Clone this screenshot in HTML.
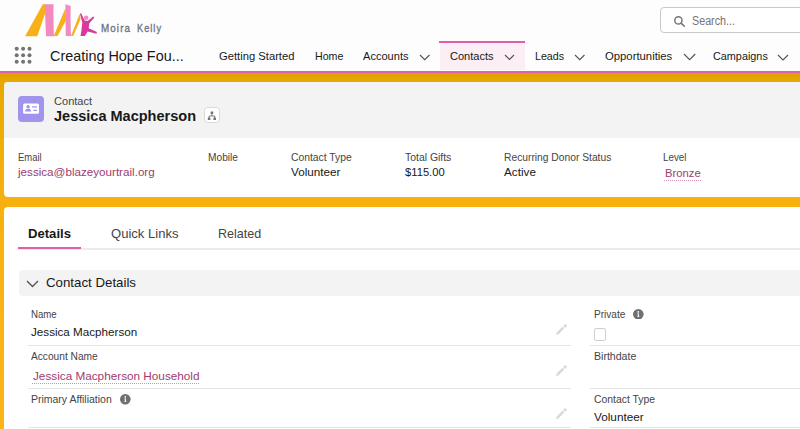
<!DOCTYPE html><html><head><meta charset="utf-8"><style>
html,body{margin:0;padding:0;}
body{width:800px;height:429px;overflow:hidden;position:relative;background:#fff;font-family:"Liberation Sans",sans-serif;}
.t{position:absolute;white-space:nowrap;line-height:1;transform-origin:0 0;}
.r{position:absolute;}
</style></head><body>
<div class="r" style="left:0px;top:0px;width:800px;height:71px;background:#fdfdfd"></div>
<div class="r" style="left:0px;top:70.5px;width:800px;height:2.5px;background:#e060a8"></div>
<div class="r" style="left:0px;top:73px;width:800px;height:356px;background:linear-gradient(#dea000 0px,#e9a801 9px,#f7b10f 127px,#fbb515 356px)"></div>
<div class="r" style="left:439px;top:41px;width:86px;height:2px;background:#e060a8"></div>
<div class="r" style="left:439.5px;top:43px;width:85.5px;height:26.5px;background:#fbeef4"></div>
<svg class="r" style="left:0;top:0" width="170" height="40" viewBox="0 0 170 40">
<path d="M25.1 36.2 L42.8 4.2 L45.2 4.2 L45.6 12 L37.3 36.2 Z" fill="#f7b116"/>
<path d="M44.7 4.2 L53.6 4.2 C53.2 14 53.6 26 54 36.2 L46.1 36.2 C45.4 26 45.2 14 44.7 4.2 Z" fill="#f28ac0"/>
<path d="M53.7 35.9 L65.5 8 L66.2 20 L57.5 35.9 Z" fill="#f7b116"/>
<path d="M65.4 4.2 L70.7 6 C70.4 15 70.6 26 71 35.9 L65.8 35.9 C65.6 26 65.6 15 65.4 4.2 Z" fill="#f28ac0"/>
<path d="M71 35.9 L79.6 14 L80.6 19 L73.2 35.9 Z" fill="#f7b116"/>
<path d="M79.9 13.7 L81.1 13.3 L84.7 20.4 L87.7 20.9 L93.1 16.5 L94.3 17.5 L89.3 23.2 L88.7 28.3 L96.9 32.0 L96.5 33.8 L87.6 31.5 L84.9 36.1 L80.5 36.1 L81.5 30.0 L82.3 22.6 Z" fill="#d63a9c"/>
<circle cx="86.2" cy="17.7" r="2.25" fill="#f08cc0"/>
</svg>
<div class="t" style="left:101.00px;top:23px;font-size:11.8px;color:#6d737b;transform:scaleX(0.8350);-webkit-text-stroke:0.35px #6d737b;letter-spacing:1.3px;">Moira</div>
<div class="t" style="left:137.00px;top:23px;font-size:11.8px;color:#6d737b;transform:scaleX(0.7798);-webkit-text-stroke:0.35px #6d737b;letter-spacing:1.3px;">Kelly</div>
<div class="r" style="left:659.8px;top:7px;width:160px;height:25.8px;background:#fff;border:1px solid #c9c9c9;border-radius:4px;box-sizing:border-box"></div>
<svg class="r" style="left:672;top:14" width="14" height="14" viewBox="0 0 14 14"><circle cx="6.4" cy="6.4" r="3.6" fill="none" stroke="#767676" stroke-width="1.5"/><path d="M9.1 9.1 L12.3 12.2" stroke="#767676" stroke-width="1.6" stroke-linecap="round"/></svg>
<div class="t" style="left:692.00px;top:15px;font-size:12px;color:#747474;transform:scaleX(0.8953);">Search...</div>
<svg class="r" style="left:0;top:0" width="40" height="70" viewBox="0 0 40 70"><circle cx="16.7" cy="48.7" r="2.0" fill="#747474"/><circle cx="16.7" cy="55.2" r="2.0" fill="#747474"/><circle cx="16.7" cy="61.7" r="2.0" fill="#747474"/><circle cx="23.1" cy="48.7" r="2.0" fill="#747474"/><circle cx="23.1" cy="55.2" r="2.0" fill="#747474"/><circle cx="23.1" cy="61.7" r="2.0" fill="#747474"/><circle cx="29.5" cy="48.7" r="2.0" fill="#747474"/><circle cx="29.5" cy="55.2" r="2.0" fill="#747474"/><circle cx="29.5" cy="61.7" r="2.0" fill="#747474"/></svg>
<div class="t" style="left:50.00px;top:49px;font-size:14.6px;color:#181818;transform:scaleX(0.9869);">Creating Hope Fou...</div>
<div class="t" style="left:219.00px;top:51px;font-size:11.8px;color:#181818;transform:scaleX(0.9511);">Getting Started</div>
<div class="t" style="left:314.60px;top:51px;font-size:11.8px;color:#181818;transform:scaleX(0.9023);">Home</div>
<div class="t" style="left:363.00px;top:51px;font-size:11.8px;color:#181818;transform:scaleX(0.9376);">Accounts</div>
<div class="t" style="left:449.90px;top:51px;font-size:11.8px;color:#181818;transform:scaleX(0.9360);">Contacts</div>
<div class="t" style="left:534.70px;top:51px;font-size:11.8px;color:#181818;transform:scaleX(0.9034);">Leads</div>
<div class="t" style="left:605.00px;top:51px;font-size:11.8px;color:#181818;transform:scaleX(0.9582);">Opportunities</div>
<div class="t" style="left:713.00px;top:51px;font-size:11.8px;color:#181818;transform:scaleX(0.9183);">Campaigns</div>
<svg class="r" style="left:418px;top:52.625px" width="13.5" height="8.75"><path d="M2 2 L6.75 6.75 L11.5 2" fill="none" stroke="#555" stroke-width="1.15"/></svg>
<svg class="r" style="left:503px;top:52.75px" width="13" height="8.5"><path d="M2 2 L6.5 6.5 L11 2" fill="none" stroke="#555" stroke-width="1.15"/></svg>
<svg class="r" style="left:573.3px;top:52.63749999999999px" width="13.450000000000045" height="8.725000000000023"><path d="M2 2 L6.725000000000023 6.725000000000023 L11.450000000000045 2" fill="none" stroke="#555" stroke-width="1.15"/></svg>
<svg class="r" style="left:681.8px;top:52.19999999999999px" width="15.200000000000045" height="9.600000000000023"><path d="M2 2 L7.600000000000023 7.600000000000023 L13.200000000000045 2" fill="none" stroke="#555" stroke-width="1.15"/></svg>
<svg class="r" style="left:776px;top:52.5px" width="14" height="9.0"><path d="M2 2 L7.0 7.0 L12 2" fill="none" stroke="#555" stroke-width="1.15"/></svg>
<div class="r" style="left:4px;top:82px;width:900px;height:114.6px;background:#fff;border-radius:4px;overflow:hidden"></div>
<div class="r" style="left:4px;top:82px;width:900px;height:56px;background:#f3f3f3;border-radius:4px 4px 0 0"></div>
<svg class="r" style="left:18px;top:96px" width="26" height="26" viewBox="0 0 26 26">
<rect x="0" y="0" width="26" height="26" rx="4" fill="#a094ec"/>
<rect x="5.1" y="7.5" width="15.9" height="10.3" rx="1.5" fill="#fff"/>
<circle cx="10.1" cy="10.7" r="1.7" fill="#a094ec"/>
<path d="M7.1 15.4 C7.1 13.2 8.6 12.8 10.1 12.8 C11.6 12.8 13.1 13.2 13.1 15.4 Z" fill="#a094ec"/>
<rect x="14" y="10.3" width="5" height="1.2" fill="#a094ec"/>
<rect x="15.4" y="13.8" width="3.6" height="1.2" fill="#a094ec"/>
</svg>
<div class="t" style="left:54.40px;top:96px;font-size:10.5px;color:#444;transform:scaleX(1.0525);">Contact</div>
<div class="t" style="left:54.00px;top:109px;font-size:14.5px;color:#181818;font-weight:bold;transform:scaleX(1.0011);">Jessica Macpherson</div>
<svg class="r" style="left:203.5px;top:106.5px" width="16" height="16" viewBox="0 0 16 16">
<rect x="0.5" y="0.5" width="15" height="15" rx="3" fill="#fff" stroke="#d9d9d9"/>
<rect x="6.6" y="4.6" width="2.6" height="2.5" rx="0.4" fill="#747474"/>
<path d="M7.9 7 V9 M5.1 11 V9 H10.7 V11" fill="none" stroke="#747474" stroke-width="0.9"/>
<rect x="3.8" y="10.6" width="2.6" height="2.5" rx="0.4" fill="#747474"/>
<rect x="9.4" y="10.6" width="2.6" height="2.5" rx="0.4" fill="#747474"/>
</svg>
<div class="t" style="left:18.40px;top:152px;font-size:10.5px;color:#444;transform:scaleX(0.8990);">Email</div>
<div class="t" style="left:208.00px;top:152px;font-size:10.5px;color:#444;transform:scaleX(0.9702);">Mobile</div>
<div class="t" style="left:291.00px;top:152px;font-size:10.5px;color:#444;transform:scaleX(0.9856);">Contact Type</div>
<div class="t" style="left:404.70px;top:152px;font-size:10.5px;color:#444;transform:scaleX(0.9920);">Total Gifts</div>
<div class="t" style="left:503.60px;top:152px;font-size:10.5px;color:#444;transform:scaleX(0.9779);">Recurring Donor Status</div>
<div class="t" style="left:663.20px;top:152px;font-size:10.5px;color:#444;transform:scaleX(0.9325);">Level</div>
<div class="t" style="left:18.29px;top:167px;font-size:11.5px;color:#9f3b70;transform:scaleX(1.0124);">jessica@blazeyourtrail.org</div>
<div class="t" style="left:291.00px;top:167px;font-size:11.5px;color:#181818;transform:scaleX(1.0167);">Volunteer</div>
<div class="t" style="left:404.70px;top:167px;font-size:11.5px;color:#181818;transform:scaleX(0.9752);">$115.00</div>
<div class="t" style="left:503.60px;top:167px;font-size:11.5px;color:#181818;transform:scaleX(1.0189);">Active</div>
<div class="t" style="left:665.30px;top:168px;font-size:11.8px;color:#9f3b70;transform:scaleX(0.9551);">Bronze</div>
<div class="r" style="left:664px;top:180px;width:38px;height:1px;background:repeating-linear-gradient(to right,#cf93b6 0 1px,transparent 1px 2px)"></div>
<div class="r" style="left:4px;top:207px;width:900px;height:300px;background:#fff;border-radius:4px"></div>
<div class="t" style="left:28.00px;top:227px;font-size:13px;color:#181818;font-weight:bold;transform:scaleX(1.0084);">Details</div>
<div class="t" style="left:110.50px;top:227px;font-size:13px;color:#444;transform:scaleX(1.0048);">Quick Links</div>
<div class="t" style="left:218.00px;top:227px;font-size:13px;color:#444;transform:scaleX(0.9650);">Related</div>
<div class="r" style="left:18px;top:248px;width:800px;height:2px;background:#ebebeb"></div>
<div class="r" style="left:18px;top:247px;width:63.2px;height:2.4px;background:#e060a8"></div>
<div class="r" style="left:19px;top:270px;width:800px;height:25.6px;background:#f3f3f3;border-radius:4px"></div>
<svg class="r" style="left:25px;top:278.55px" width="15" height="9.5"><path d="M2 2 L7.5 7.5 L13 2" fill="none" stroke="#555" stroke-width="1.4"/></svg>
<div class="t" style="left:46.00px;top:276px;font-size:13px;color:#181818;transform:scaleX(1.0211);">Contact Details</div>
<div class="t" style="left:31.40px;top:309px;font-size:10.5px;color:#444;transform:scaleX(0.9176);">Name</div>
<div class="t" style="left:31.25px;top:351px;font-size:10.5px;color:#444;transform:scaleX(0.9691);">Account Name</div>
<div class="t" style="left:31.25px;top:394px;font-size:10.5px;color:#444;transform:scaleX(0.9978);">Primary Affiliation</div>
<div class="t" style="left:593.60px;top:309px;font-size:10.5px;color:#444;transform:scaleX(0.9608);">Private</div>
<div class="t" style="left:593.60px;top:351px;font-size:10.5px;color:#444;transform:scaleX(1.0065);">Birthdate</div>
<div class="t" style="left:593.60px;top:394px;font-size:10.5px;color:#444;transform:scaleX(0.9905);">Contact Type</div>
<div class="t" style="left:31.40px;top:327px;font-size:11.5px;color:#181818;transform:scaleX(1.0131);">Jessica Macpherson</div>
<div class="t" style="left:33.00px;top:371px;font-size:11.5px;color:#9f3b70;transform:scaleX(1.0214);">Jessica Macpherson Household</div>
<div class="r" style="left:32px;top:382.5px;width:168px;height:1.5px;background:repeating-linear-gradient(to right,#cf93b6 0 1px,transparent 1px 2px)"></div>
<div class="t" style="left:593.60px;top:412px;font-size:11.5px;color:#181818;transform:scaleX(1.0229);">Volunteer</div>
<div class="r" style="left:28px;top:345px;width:543px;height:1px;background:#e5e5e5"></div>
<div class="r" style="left:590.4px;top:345px;width:300px;height:1px;background:#e5e5e5"></div>
<div class="r" style="left:28px;top:387.7px;width:543px;height:1px;background:#e5e5e5"></div>
<div class="r" style="left:590.4px;top:387.7px;width:300px;height:1px;background:#e5e5e5"></div>
<div class="r" style="left:28px;top:427px;width:543px;height:1px;background:#e5e5e5"></div>
<div class="r" style="left:590.4px;top:427px;width:300px;height:1px;background:#e5e5e5"></div>
<svg class="r" style="left:120.4px;top:394.2px" width="10.6" height="10.6" viewBox="0 0 10.6 10.6"><circle cx="5.3" cy="5.3" r="5.3" fill="#707070"/><circle cx="5.3" cy="2.9" r="0.85" fill="#fff"/><path d="M4.3 4.6 H5.9 V7.4 H6.5 V8.1 H4.2 V7.4 H4.8 V5.3 H4.3 Z" fill="#fff"/></svg>
<svg class="r" style="left:633.1px;top:308.6px" width="10.6" height="10.6" viewBox="0 0 10.6 10.6"><circle cx="5.3" cy="5.3" r="5.3" fill="#707070"/><circle cx="5.3" cy="2.9" r="0.85" fill="#fff"/><path d="M4.3 4.6 H5.9 V7.4 H6.5 V8.1 H4.2 V7.4 H4.8 V5.3 H4.3 Z" fill="#fff"/></svg>
<div class="r" style="left:593.5px;top:328.4px;width:12.6px;height:12.3px;border:1px solid #cfcfcf;border-radius:2px;box-sizing:border-box;background:#fff"></div>
<svg class="r" style="left:554.6px;top:323.9px" width="13" height="12" viewBox="0 0 13 12"><path d="M1 11 L1.6 8.6 L3.4 10.4 Z" fill="#d9d9d9"/><path d="M2.5 9.5 L8.3 3.7" stroke="#d9d9d9" stroke-width="2.5"/><path d="M9 3 L11.2 0.8" stroke="#d9d9d9" stroke-width="2.6"/></svg>
<svg class="r" style="left:554.6px;top:365.2px" width="13" height="12" viewBox="0 0 13 12"><path d="M1 11 L1.6 8.6 L3.4 10.4 Z" fill="#d9d9d9"/><path d="M2.5 9.5 L8.3 3.7" stroke="#d9d9d9" stroke-width="2.5"/><path d="M9 3 L11.2 0.8" stroke="#d9d9d9" stroke-width="2.6"/></svg>
<svg class="r" style="left:554.6px;top:408.4px" width="13" height="12" viewBox="0 0 13 12"><path d="M1 11 L1.6 8.6 L3.4 10.4 Z" fill="#d9d9d9"/><path d="M2.5 9.5 L8.3 3.7" stroke="#d9d9d9" stroke-width="2.5"/><path d="M9 3 L11.2 0.8" stroke="#d9d9d9" stroke-width="2.6"/></svg>
</body></html>
